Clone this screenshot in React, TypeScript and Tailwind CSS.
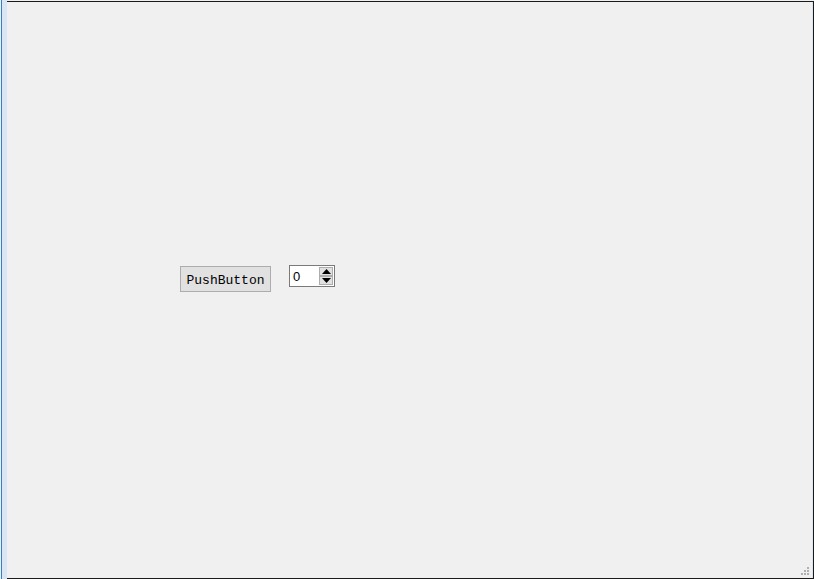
export default function App() {
  return (
    <div className="w-[814px] h-[579px] flex bg-[#f0f0f0] overflow-hidden" style={{ fontFamily: '"Liberation Mono", monospace' }}>
      <div className="w-[1px] h-full bg-[#e8eef5]" />
      <div className="w-[1px] h-full bg-[#3f7fc0]" />
      <div className="w-[5px] h-full bg-[#d9e6f4]" />
      <div className="flex-1 flex flex-col">
        <div className="h-[1px] bg-[#f0f0f0]" />
        <div className="flex-1 flex flex-col border-t border-b border-r border-[#1a1a1a] relative">
          <div className="flex-1 flex border-r border-[#d9e6f4]">
            <div className="flex flex-col flex-1">
              <div className="h-[263px]" />
              <div className="flex items-start">
                <div className="w-[173px]" />
                <div className="mt-[1px] w-[91px] h-[26px] border border-[#adadad] bg-[#e1e1e1] flex items-center justify-center text-[13px] text-black leading-none pt-[2px]">
                  PushButton
                </div>
                <div className="w-[18px]" />
                <div className="w-[46px] h-[22px] border border-[#7a7a7a] bg-white flex">
                  <div className="flex-1 text-[13px] leading-none pl-[3px] pt-[4px] text-black font-['Liberation_Sans',sans-serif]">0</div>
                  <div className="w-[15px] flex flex-col py-[1px] pr-[1px]">
                    <div className="flex-1 bg-[#e1e1e1] border border-[#adadad] flex items-center justify-center">
                      <svg width="9" height="5" viewBox="0 0 9 5"><path d="M0 5 L4.5 0 L9 5 Z" fill="#000" /></svg>
                    </div>
                    <div className="flex-1 bg-[#e1e1e1] border border-[#adadad] flex items-center justify-center">
                      <svg width="9" height="5" viewBox="0 0 9 5"><path d="M0 0 L9 0 L4.5 5 Z" fill="#000" /></svg>
                    </div>
                  </div>
                </div>
              </div>
            </div>
          </div>
          <svg className="absolute right-[3px] bottom-[2px]" width="10" height="10" viewBox="0 0 10 10">
            <rect x="7" y="1" width="2" height="2" fill="#b0b0b0" />
            <rect x="4" y="4" width="2" height="2" fill="#b0b0b0" />
            <rect x="7" y="4" width="2" height="2" fill="#b0b0b0" />
            <rect x="1" y="7" width="2" height="2" fill="#b0b0b0" />
            <rect x="4" y="7" width="2" height="2" fill="#b0b0b0" />
            <rect x="7" y="7" width="2" height="2" fill="#b0b0b0" />
          </svg>
        </div>
      </div>
    </div>
  )
}
